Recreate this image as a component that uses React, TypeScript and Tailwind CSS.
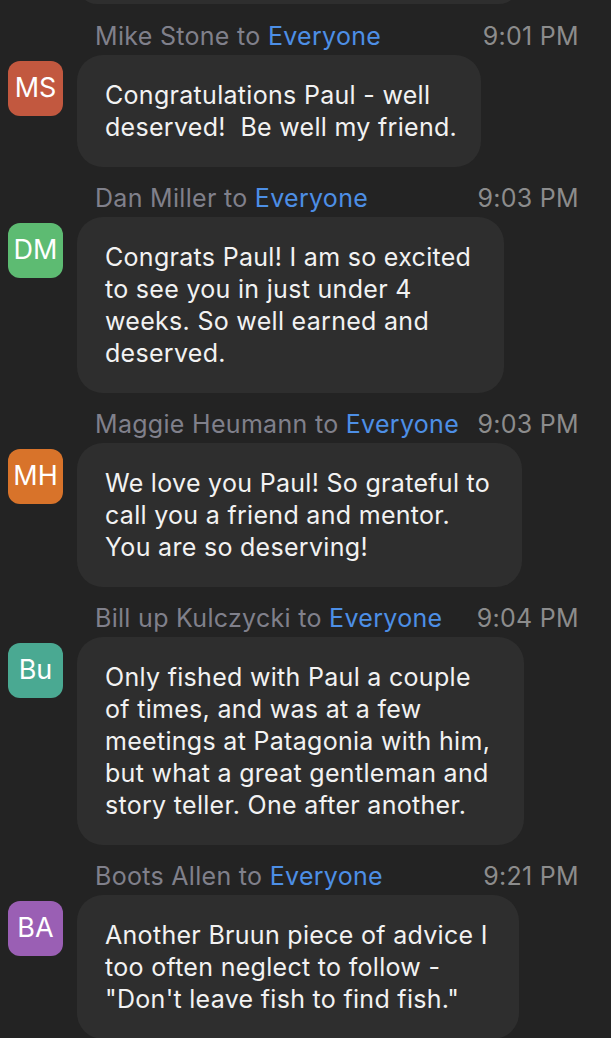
const messages = [
  {
    name: "Mike Stone",
    time: "9:01 PM",
    initials: "MS",
    color: "bg-[#c2583f]",
    width: "w-[404px]",
    lines: ["Congratulations Paul - well", "deserved!  Be well my friend."],
  },
  {
    name: "Dan Miller",
    time: "9:03 PM",
    initials: "DM",
    color: "bg-[#5dbb72]",
    width: "w-[427px]",
    lines: [
      "Congrats Paul! I am so excited",
      "to see you in just under 4",
      "weeks. So well earned and",
      "deserved.",
    ],
  },
  {
    name: "Maggie Heumann",
    time: "9:03 PM",
    initials: "MH",
    color: "bg-[#d8732a]",
    width: "w-[445px]",
    lines: [
      "We love you Paul! So grateful to",
      "call you a friend and mentor.",
      "You are so deserving!",
    ],
  },
  {
    name: "Bill up Kulczycki",
    time: "9:04 PM",
    initials: "Bu",
    color: "bg-[#4aa992]",
    width: "w-[447px]",
    lines: [
      "Only fished with Paul a couple",
      "of times, and was at a few",
      "meetings at Patagonia with him,",
      "but what a great gentleman and",
      "story teller. One after another.",
    ],
  },
  {
    name: "Boots Allen",
    time: "9:21 PM",
    initials: "BA",
    color: "bg-[#9a5fb4]",
    width: "w-[442px]",
    lines: [
      "Another Bruun piece of advice I",
      "too often neglect to follow -",
      "\"Don't leave fish to find fish.\"",
    ],
  },
];

export default function App() {
  return (
    <div className="min-h-screen overflow-hidden bg-[#232323] font-['Inter','Liberation_Sans',sans-serif]">
      {/* tail of the previous bubble */}
      <div className="flex h-[4px] items-end overflow-hidden pl-[77px]">
        <div className="h-[40px] w-[442px] shrink-0 rounded-[26px] bg-[#2e2e2e]" />
      </div>

      {messages.map((m, i) => (
        <div key={m.initials} className={i === 0 ? "mt-[18px]" : "mt-[17px]"}>
          <div className="flex h-[28px] items-center justify-between pl-[95px] pr-[32px] text-[25px] leading-[28px] tracking-[0.3px]">
            <span className="text-[#80808b]">
              {m.name} to <span className="text-[#4d8fe6]">Everyone</span>
            </span>
            <span className="text-[#8c8c8c]">{m.time}</span>
          </div>
          <div className="mt-[5px] flex items-start gap-[14px] pl-[8px]">
            <div
              className={`mt-[6px] flex h-[55px] w-[55px] shrink-0 items-center justify-center rounded-[12px] text-[27px] text-white ${m.color}`}
            >
              {m.initials}
            </div>
            <div
              className={`${m.width} shrink-0 whitespace-pre rounded-[26px] bg-[#2e2e2e] py-[24px] pl-[28px] text-[25px] leading-[32px] tracking-[0.3px] text-[#f2f2f2]`}
            >
              {m.lines.map((l) => (
                <div key={l}>{l}</div>
              ))}
            </div>
          </div>
        </div>
      ))}
    </div>
  );
}
